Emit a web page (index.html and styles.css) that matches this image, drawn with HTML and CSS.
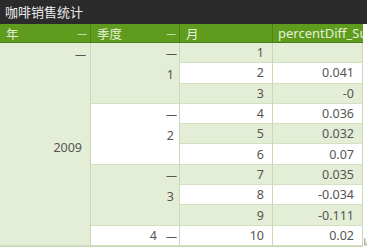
FILE: index.html
```html
<!DOCTYPE html>
<html>
<head>
<meta charset="utf-8">
<link rel="stylesheet" href="styles.css">
</head>
<body>
<div class="page">
  <div class="title">咖啡销售统计</div>
  <div class="wrap">
  <div class="grid">
    <div class="hd"><span>年</span><span class="mi">—</span></div>
    <div class="hd"><span>季度</span><span class="mi">—</span></div>
    <div class="hd"><span>月</span></div>
    <div class="hd last"><span class="clip">percentDiff_Su</span></div>

    <div class="cell g year"><span class="mi">—</span><span class="lbl">2009</span></div>

    <div class="cell g q s3"><span class="mi">—</span><span class="lbl">1</span></div>
    <div class="cell g num">1</div><div class="cell g num last"></div>
    <div class="cell w num">2</div><div class="cell w num last">0.041</div>
    <div class="cell g num">3</div><div class="cell g num last">-0</div>

    <div class="cell w q s3"><span class="mi">—</span><span class="lbl">2</span></div>
    <div class="cell w num">4</div><div class="cell w num last">0.036</div>
    <div class="cell g num">5</div><div class="cell g num last">0.032</div>
    <div class="cell w num">6</div><div class="cell w num last">0.07</div>

    <div class="cell g q s3"><span class="mi">—</span><span class="lbl">3</span></div>
    <div class="cell g num">7</div><div class="cell g num last">0.035</div>
    <div class="cell w num">8</div><div class="cell w num last">-0.034</div>
    <div class="cell g num">9</div><div class="cell g num last">-0.111</div>

    <div class="cell w q1"><span>4</span><span class="mi">—</span></div>
    <div class="cell w num">10</div><div class="cell w num last">0.02</div>
  </div>
  <svg class="grip" width="4" height="10" viewBox="0 0 4 10"><rect x="0" y="0" width="2" height="10" fill="#b0b0b0"/><rect x="2" y="6" width="2" height="4" fill="#c8c8c8"/></svg>
  </div>
</div>
</body>
</html>
```
FILE: styles.css
```css
* { box-sizing: border-box; }
html, body { margin: 0; padding: 0; background: #ffffff; }
body {
  font-family: "Noto Sans", "Noto Sans CJK SC", sans-serif;
  font-size: 12.5px;
  color: #555555;
}
.page { width: 367px; height: 251px; overflow: hidden; }
.title {
  height: 24px;
  background: #2b2b2b;
  color: #ececec;
  font-size: 13px;
  line-height: 24px;
  padding-left: 5px;
  font-family: "Noto Sans CJK SC", sans-serif;
  width: 367px;
}
.wrap { display: flex; align-items: flex-end; }
.grip { margin-left: 1px; }
.grid {
  width: 363px;
  flex: none;
  display: grid;
  grid-template-columns: 91px 89px 93px 90px;
  grid-template-rows: 19px repeat(10, 20.3px);
  border-bottom: 1px solid #c9d9b6;
}
.hd {
  background: #5f9c1e;
  color: #e4f0d6;
  border-right: 1px solid #4d8415;
  border-bottom: 1px solid #4a7f13;
  display: flex;
  justify-content: space-between;
  align-items: center;
  padding: 0 3px 0 6px;
  font-family: "Noto Sans CJK SC", sans-serif;
  font-size: 12.5px;
  white-space: nowrap;
  overflow: hidden;
}
.hd.last { border-right: none; padding-left: 5px; }
.hd .mi { color: #dbe9c9; }
.clip { font-family: "Noto Sans", sans-serif; font-size: 13px; }
.mi { font-size: 11px; line-height: 1; }
.cell {
  border-right: 1px solid #c9d9b6;
  border-bottom: 1px solid #d3e0c2;
  padding: 0 6px 0 4px;
}
.g { background: #e4edd5; }
.w { background: #ffffff; }
.num {
  display: flex;
  align-items: center;
  justify-content: flex-end;
  padding-right: 8px;
}
.year {
  grid-row: span 10;
  display: flex;
  flex-direction: column;
  align-items: flex-end;
  padding-top: 5px;
  padding-right: 4px;
}
.year .lbl { margin-top: auto; margin-bottom: auto; padding-bottom: 8px; padding-right: 4px; }
.q {
  display: flex;
  flex-direction: column;
  align-items: flex-end;
  padding-top: 4px;
  padding-right: 2px;
}
.s3 { grid-row: span 3; }
.q .lbl { margin-top: 8px; padding-right: 3px; }
.q1 {
  display: flex;
  align-items: center;
  justify-content: flex-end;
  gap: 9px;
  padding-right: 2px;
}
```
